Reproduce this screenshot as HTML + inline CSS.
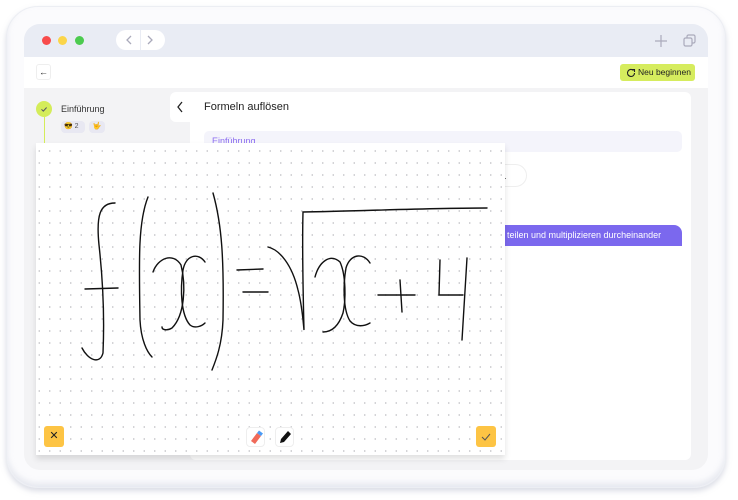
<!DOCTYPE html>
<html><head><meta charset="utf-8"><style>
*{margin:0;padding:0;box-sizing:border-box}
body{width:738px;height:500px;background:#fff;font-family:"Liberation Sans",sans-serif;position:relative;overflow:hidden}
.abs{position:absolute}
</style></head><body>
<div class="abs" style="left:6px;top:6px;width:720px;height:482px;border-radius:32px;background:#fbfbfd;box-shadow:0 3px 6px rgba(150,155,180,.35),inset 0 -4px 6px rgba(200,205,220,.4);border:1px solid #eceef3"></div>
<div class="abs" style="left:24px;top:24px;width:684px;height:446px;border-radius:16px;background:#f3f3f5;overflow:hidden">
  <div class="abs" style="left:0;top:0;width:684px;height:33px;background:#e9ecf4"></div>
  <div class="abs" style="left:18px;top:12px;width:9px;height:9px;border-radius:50%;background:#f84b4b"></div>
  <div class="abs" style="left:34px;top:12px;width:9px;height:9px;border-radius:50%;background:#fbd549"></div>
  <div class="abs" style="left:51px;top:12px;width:9px;height:9px;border-radius:50%;background:#4ccb4f"></div>
  <div class="abs" style="left:92px;top:6px;width:49px;height:20px;border-radius:10px;background:#fff"></div>
  <div class="abs" style="left:116px;top:6px;width:1px;height:20px;background:#e9ecf4"></div>
  <svg class="abs" style="left:92px;top:6px" width="49" height="20"><path d="M15 6l-4 4 4 4M32 6l4 4-4 4" fill="none" stroke="#aab" stroke-width="1.3"/></svg>
  <svg class="abs" style="left:628px;top:8px" width="60" height="18"><path d="M9 3v12M3 9h12" stroke="#aab" stroke-width="1.2"/><rect x="32" y="6" width="8" height="8" rx="1.5" fill="none" stroke="#aab" stroke-width="1.2"/><path d="M35 6V4.5a1.5 1.5 0 0 1 1.5-1.5h5a1.5 1.5 0 0 1 1.5 1.5v5a1.5 1.5 0 0 1-1.5 1.5H40" fill="none" stroke="#aab" stroke-width="1.2"/></svg>
  <div class="abs" style="left:0;top:33px;width:684px;height:31px;background:#fff"></div>
  <div class="abs" style="left:12px;top:40px;width:15px;height:16px;border:1px solid #eee;border-radius:3px;font-size:9px;text-align:center;line-height:14px;color:#222">←</div>
  <div class="abs" style="left:596px;top:40px;width:75px;height:17px;border-radius:3px;background:#d6ec5e;font-size:8.5px;line-height:17px;color:#222;padding-left:18px;white-space:nowrap">Neu beginnen</div>
  <svg class="abs" style="left:602px;top:44px" width="10" height="10"><path d="M7.5 2.5A3.5 3.5 0 1 0 8.5 5" fill="none" stroke="#222" stroke-width="1.1"/><path d="M6 1.5h2.5V4" fill="none" stroke="#222" stroke-width="1.1"/></svg>
  <div class="abs" style="left:12px;top:77px;width:16px;height:16px;border-radius:50%;background:#d4ec5a"></div>
  <svg class="abs" style="left:12px;top:77px" width="16" height="16"><path d="M5.5 8.3l1.8 1.8 3.3-3.6" fill="none" stroke="#556" stroke-width="1"/></svg>
  <div class="abs" style="left:19.5px;top:93px;width:1px;height:30px;background:#d4ec5a"></div>
  <div class="abs" style="left:37px;top:80px;font-size:9px;color:#333">Einführung</div>
  <div class="abs" style="left:37px;top:97px;width:24px;height:12px;border-radius:4px;background:#e8e8f2;font-size:7px;line-height:12px;color:#555;padding-left:3px">😎 2</div>
  <div class="abs" style="left:65px;top:97px;width:16px;height:12px;border-radius:4px;background:#e8e8f2;font-size:7px;line-height:12px;text-align:center">🤟</div>
  <div class="abs" style="left:146px;top:68px;width:30px;height:30px;border-radius:6px;background:#fff"></div>
  <svg class="abs" style="left:150px;top:76px" width="12" height="14"><path d="M8 2L4 7l4 5" fill="none" stroke="#222" stroke-width="1.3"/></svg>
  <div class="abs" style="left:166px;top:68px;width:501px;height:368px;border-radius:6px;background:#fff"></div>
  <div class="abs" style="left:180px;top:77px;font-size:11px;color:#222">Formeln auflösen</div>
  <div class="abs" style="left:180px;top:107px;width:478px;height:21px;border-radius:5px;background:#f4f4fb;font-size:9px;color:#8b6cf0;padding:5px 8px">Einführung</div>
  <div class="abs" style="left:440px;top:140px;width:63px;height:23px;border-radius:12px;border:1px solid #eee;font-size:9px;color:#333;padding:6px 0 0 27px">e x.</div>
  <div class="abs" style="left:440px;top:201px;width:218px;height:21px;border-radius:8px 8px 0 8px;background:#7b68ee;font-size:9px;color:#fff;padding:5px 0 0 26px;white-space:nowrap">lem teilen und multiplizieren durcheinander</div>
</div>
<div class="abs" style="left:36px;top:143px;width:469px;height:312px;background-color:#fff;background-image:radial-gradient(circle,#c8c8cc 0.7px,transparent 1px);background-size:10.5px 12px;background-position:-2px 2px;box-shadow:0 4px 6px rgba(0,0,0,.12)"></div>
<svg class="abs" style="left:0;top:0" width="738" height="500" fill="none" stroke="#111" stroke-width="1.4" stroke-linecap="round">
<path d="M115 203C100 203 96 215 99 245C104 290 104 330 103 353C100 365 88 360 82 348"/>
<path d="M85 289L118 288"/>
<path d="M148 197C138 222 139 260 140 320C141 340 147 352 152 357"/>
<path d="M153 272C158 258 173 252 181 265C186 285 185 315 172 328C167 331 162 330 162 327"/>
<path d="M205 262C198 252 186 255 183 270C180 290 181 315 190 325C195 329 202 326 205 323"/>
<path d="M213 193C222 225 224 260 223 320C222 345 216 360 212 370"/>
<path d="M237 270L263 269M243 292L268 292"/>
<path d="M268 247C280 250 292 265 298 290C302 305 303 320 304 330C303 290 302 250 303 212C360 211 430 208 487 208"/>
<path d="M315 277C319 262 330 253 340 262C346 275 346 300 343 313C338 328 330 332 323 332"/>
<path d="M370 263C363 252 350 254 346 268C343 285 343 310 350 321C356 328 365 326 370 323"/>
<path d="M378 295L415 295M400 280L402 312"/>
<path d="M440 260L439 295L463 295M467 258L462 340"/>
</svg>
<div class="abs" style="left:44px;top:426px;width:20px;height:21px;border-radius:3px;background:#fdc444;font-size:11px;text-align:center;line-height:21px;color:#222">✕</div>
<div class="abs" style="left:476px;top:426px;width:20px;height:21px;border-radius:3px;background:#fdc444"></div>
<svg class="abs" style="left:476px;top:426px" width="20" height="21"><path d="M6 11l3 3 5-6" fill="none" stroke="#555" stroke-width="1"/></svg>
<div class="abs" style="left:246px;top:427px;width:19px;height:20px;border-radius:4px;background:#fff;border:1px solid #eee"></div>
<svg class="abs" style="left:246px;top:427px" width="19" height="20"><path d="M5 14l6-8 4 3-6 8z" fill="#f06a5a"/><path d="M11 6l2-2.5 4 3-2 2.5z" fill="#4a9bf5"/></svg>
<div class="abs" style="left:275px;top:427px;width:19px;height:20px;border-radius:4px;background:#fff;border:1px solid #eee"></div>
<svg class="abs" style="left:275px;top:427px" width="19" height="20"><path d="M5 16l1-4 7-8 3 3-7 8z" fill="#111"/></svg>
</body></html>
